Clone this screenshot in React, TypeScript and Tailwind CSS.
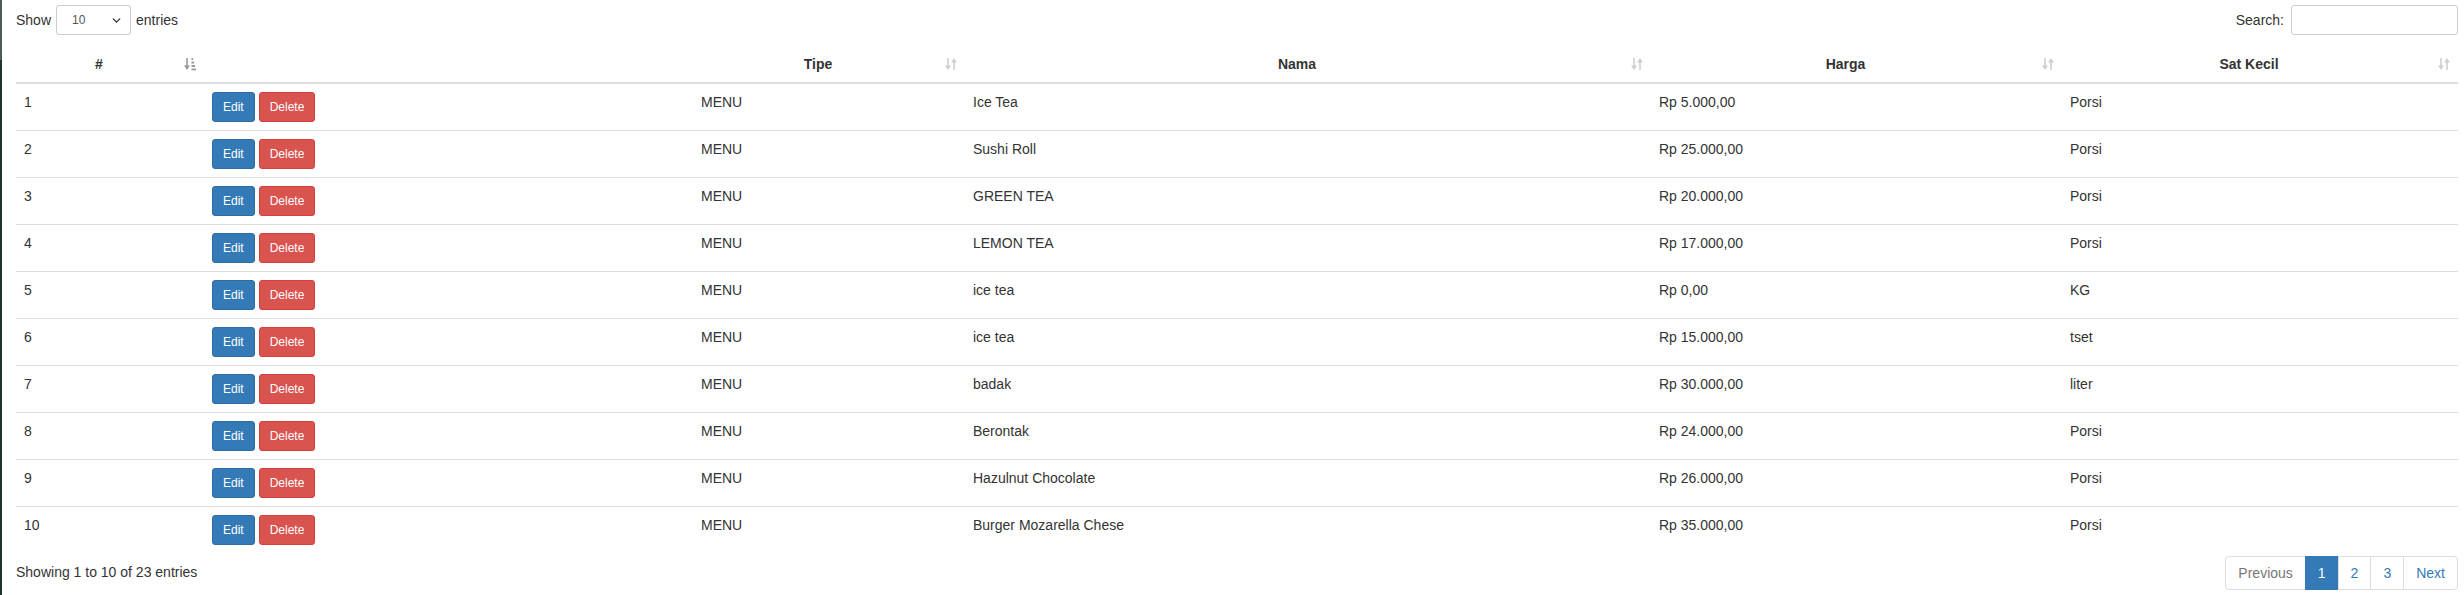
import { ChevronDown } from 'lucide-react'

type Row = {
  no: number
  tipe: string
  nama: string
  harga: string
  sat: string
}

const rows: Row[] = [
  { no: 1, tipe: 'MENU', nama: 'Ice Tea', harga: 'Rp 5.000,00', sat: 'Porsi' },
  { no: 2, tipe: 'MENU', nama: 'Sushi Roll', harga: 'Rp 25.000,00', sat: 'Porsi' },
  { no: 3, tipe: 'MENU', nama: 'GREEN TEA', harga: 'Rp 20.000,00', sat: 'Porsi' },
  { no: 4, tipe: 'MENU', nama: 'LEMON TEA', harga: 'Rp 17.000,00', sat: 'Porsi' },
  { no: 5, tipe: 'MENU', nama: 'ice tea', harga: 'Rp 0,00', sat: 'KG' },
  { no: 6, tipe: 'MENU', nama: 'ice tea', harga: 'Rp 15.000,00', sat: 'tset' },
  { no: 7, tipe: 'MENU', nama: 'badak', harga: 'Rp 30.000,00', sat: 'liter' },
  { no: 8, tipe: 'MENU', nama: 'Berontak', harga: 'Rp 24.000,00', sat: 'Porsi' },
  { no: 9, tipe: 'MENU', nama: 'Hazulnut Chocolate', harga: 'Rp 26.000,00', sat: 'Porsi' },
  { no: 10, tipe: 'MENU', nama: 'Burger Mozarella Chese', harga: 'Rp 35.000,00', sat: 'Porsi' },
]

// glyphicon-sort look-alike (both arrows), faded
function SortIcon() {
  return (
    <svg width="12" height="14" viewBox="0 0 12 14" className="absolute bottom-[11px] right-[8px]">
      <rect x="2.2" y="1" width="1.6" height="9" fill="#cfcfcf" />
      <path d="M0 8.5 L6 8.5 L3 13 Z" fill="#cfcfcf" />
      <rect x="8.2" y="4" width="1.6" height="9" fill="#cfcfcf" />
      <path d="M6 5.5 L12 5.5 L9 1 Z" fill="#cfcfcf" />
    </svg>
  )
}

// glyphicon-sort-by-attributes look-alike (active column)
function SortAscIcon() {
  return (
    <svg width="12" height="14" viewBox="0 0 12 14" className="absolute bottom-[11px] right-[8px]">
      <rect x="2.2" y="1" width="1.6" height="9" fill="#999" />
      <path d="M0 8.5 L6 8.5 L3 13 Z" fill="#999" />
      <rect x="7.5" y="1" width="1.6" height="2" fill="#999" />
      <rect x="7.5" y="4.5" width="2.6" height="2" fill="#999" />
      <rect x="7.5" y="8" width="3.6" height="2" fill="#999" />
      <rect x="7.5" y="11.5" width="4.5" height="1.8" fill="#999" />
    </svg>
  )
}

export default function App() {
  return (
    <div className="flex min-h-[595px] w-[2464px] bg-white font-['Liberation_Sans',Arial,sans-serif] text-[14px] leading-[20px] text-[#333]">
      <div className="flex w-[2px] flex-col">
        <div className="h-[60px] bg-[#4d5c5a]" />
        <div className="flex-1 bg-[#1e3431]" />
      </div>

      <div className="flex-1 pl-[14px] pr-[6px] pt-[5px]">
        <div className="flex h-[30px] items-center justify-between">
          <div className="flex items-center">
            <span>Show</span>
            <div className="ml-[5px] flex h-[30px] w-[75px] items-center justify-between rounded-[3px] border border-[#ccc] pl-[15px] pr-[7px] text-[12px] text-[#555]">
              <span>10</span>
              <ChevronDown className="h-[13px] w-[13px] text-[#333]" strokeWidth={2.5} />
            </div>
            <span className="ml-[5px]">entries</span>
          </div>
          <div className="flex items-center">
            <span>Search:</span>
            <div className="ml-[7px] h-[30px] w-[167px] rounded-[3px] border border-[#ccc] bg-white" />
          </div>
        </div>

        <table className="mt-[11px] w-full table-fixed">
          <thead>
            <tr className="border-b-2 border-[#ddd]">
              <th className="relative w-[188px] py-[8px] pl-[8px] pr-[30px] text-center font-bold">
                #
                <SortAscIcon />
              </th>
              <th className="w-[489px] p-[8px]" />
              <th className="relative w-[272px] py-[8px] pl-[8px] pr-[30px] text-center font-bold">
                Tipe
                <SortIcon />
              </th>
              <th className="relative w-[686px] py-[8px] pl-[8px] pr-[30px] text-center font-bold">
                Nama
                <SortIcon />
              </th>
              <th className="relative w-[411px] py-[8px] pl-[8px] pr-[30px] text-center font-bold">
                Harga
                <SortIcon />
              </th>
              <th className="relative py-[8px] pl-[8px] pr-[30px] text-center font-bold">
                Sat Kecil
                <SortIcon />
              </th>
            </tr>
          </thead>
          <tbody>
            {rows.map((r, idx) => (
              <tr key={r.no} className={idx === 0 ? '' : 'border-t border-[#ddd]'}>
                <td className="p-[8px] align-top">{r.no}</td>
                <td className="p-[8px] align-top">
                  <div className="flex gap-[4px]">
                    <button
                      type="button"
                      className="h-[30px] rounded-[3px] border border-[#2e6da4] bg-[#337ab7] px-[10px] text-[12px] leading-[18px] text-white"
                    >
                      Edit
                    </button>
                    <button
                      type="button"
                      className="h-[30px] rounded-[3px] border border-[#d43f3a] bg-[#d9534f] px-[10px] text-[12px] leading-[18px] text-white"
                    >
                      Delete
                    </button>
                  </div>
                </td>
                <td className="p-[8px] align-top">{r.tipe}</td>
                <td className="p-[8px] align-top">{r.nama}</td>
                <td className="p-[8px] align-top">{r.harga}</td>
                <td className="p-[8px] align-top">{r.sat}</td>
              </tr>
            ))}
          </tbody>
        </table>

        <div className="flex items-start justify-between">
          <div className="pt-[9px]">Showing 1 to 10 of 23 entries</div>
          <ul className="mt-[3px] flex">
            <li className="rounded-l-[4px] border border-[#ddd] px-[12px] py-[6px] text-[#777]">Previous</li>
            <li className="-ml-px border border-[#337ab7] bg-[#337ab7] px-[12px] py-[6px] text-white">1</li>
            <li className="-ml-px border border-[#ddd] px-[12px] py-[6px] text-[#337ab7]">2</li>
            <li className="-ml-px border border-[#ddd] px-[12px] py-[6px] text-[#337ab7]">3</li>
            <li className="-ml-px rounded-r-[4px] border border-[#ddd] px-[12px] py-[6px] text-[#337ab7]">Next</li>
          </ul>
        </div>
      </div>
    </div>
  )
}
